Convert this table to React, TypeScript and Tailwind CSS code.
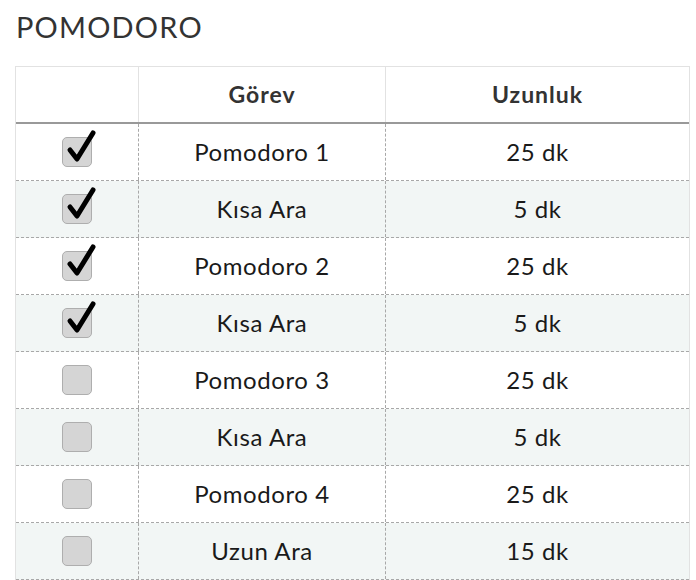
import React from "react";

const rows = [
  { done: true, task: "Pomodoro 1", len: "25 dk" },
  { done: true, task: "Kısa Ara", len: "5 dk" },
  { done: true, task: "Pomodoro 2", len: "25 dk" },
  { done: true, task: "Kısa Ara", len: "5 dk" },
  { done: false, task: "Pomodoro 3", len: "25 dk" },
  { done: false, task: "Kısa Ara", len: "5 dk" },
  { done: false, task: "Pomodoro 4", len: "25 dk" },
  { done: false, task: "Uzun Ara", len: "15 dk" },
];

function Check({ done }: { done: boolean }) {
  return (
    <div className="relative w-[30px] h-[30px]">
      <div className="w-[30px] h-[30px] rounded-[5px] bg-[#d5d5d5] border border-[#aeaeae]" />
      {done && (
        <svg
          className="absolute left-[2px] top-[-8px]"
          width="36"
          height="38"
          viewBox="0 0 36 38"
        >
          <path
            d="M6 21 L13 30 L29 4"
            fill="none"
            stroke="#000"
            strokeWidth="5"
            strokeLinecap="round"
            strokeLinejoin="round"
          />
        </svg>
      )}
    </div>
  );
}

export default function App() {
  return (
    <div className="w-[696px] h-[580px] bg-white overflow-hidden" style={{ fontFamily: "Lato, 'Noto Sans', sans-serif" }}>
      <div className="pl-[16px] pt-[9px] h-[66px] text-[29px] leading-[36px] text-[#333] tracking-[1.2px]">
        POMODORO
      </div>
      <div className="ml-[15px] w-[675px] border-l border-r border-[#e2e2e2]">
        <div className="grid grid-cols-[123px_247px_1fr] h-[58px] border-t border-[#e2e2e2] border-b-2 border-b-[#999]">
          <div className="border-r border-[#e2e2e2]" />
          <div className="border-r border-[#e2e2e2] flex items-center justify-center text-[23px] font-bold text-[#333] tracking-[1px]">
            Görev
          </div>
          <div className="flex items-center justify-center text-[23px] font-bold text-[#333] tracking-[1px]">
            Uzunluk
          </div>
        </div>
        {rows.map((r, i) => (
          <div
            key={i}
            className={`grid grid-cols-[123px_247px_1fr] h-[57px] border-b border-dashed border-[#a8a8a8] ${
              i % 2 === 1 ? "bg-[#f2f6f5]" : "bg-white"
            }`}
          >
            <div className="border-r border-dashed border-[#a8a8a8] flex items-center justify-center">
              <Check done={r.done} />
            </div>
            <div className="border-r border-dashed border-[#a8a8a8] flex items-center justify-center pb-[1px] text-[24px] font-normal text-[#1a1a1a] tracking-[0.6px]">
              {r.task}
            </div>
            <div className="flex items-center justify-center pb-[1px] text-[24px] font-normal text-[#1a1a1a] tracking-[0.6px]">
              {r.len}
            </div>
          </div>
        ))}
      </div>
    </div>
  );
}
